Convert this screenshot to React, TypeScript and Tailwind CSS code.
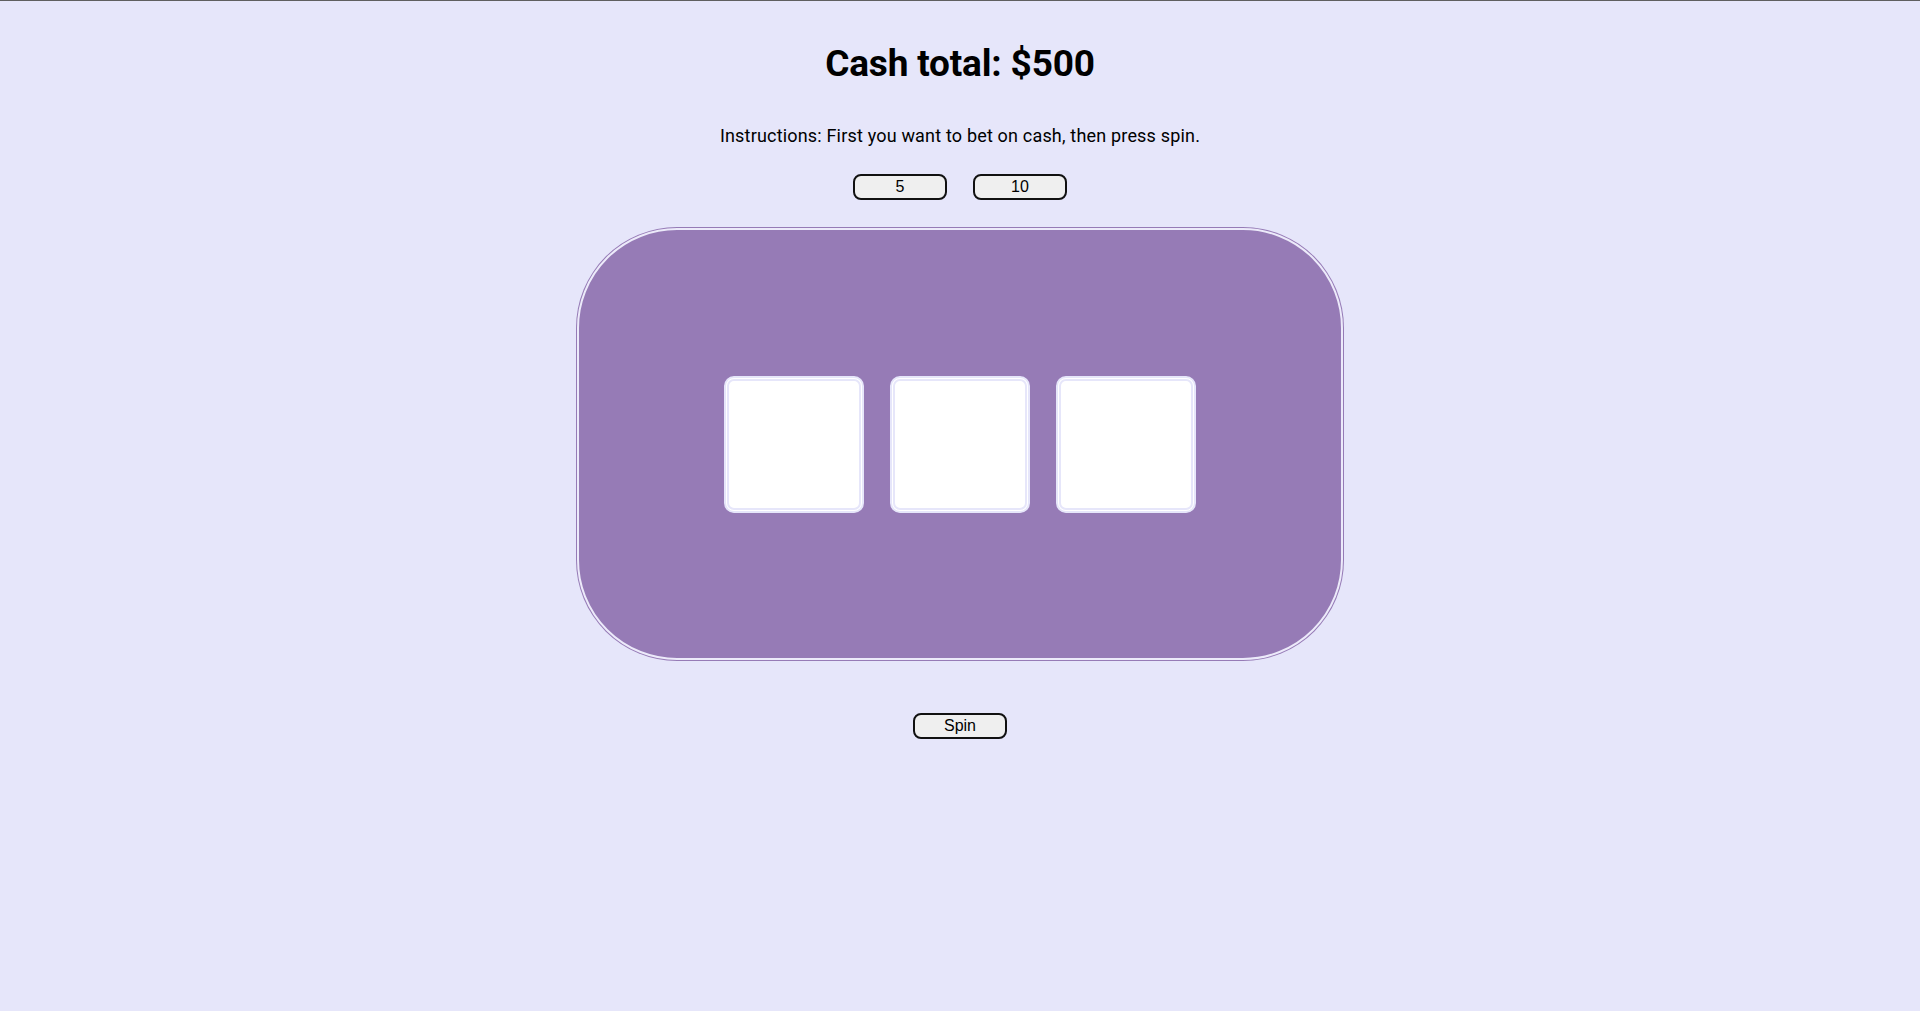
import { useState } from 'react'

const bets = [5, 10]

function Reel() {
  return (
    <div className="w-[140px] h-[137px] rounded-[10px] bg-white border-[5px] border-double border-[#e6e6fa]" />
  )
}

export default function App() {
  const [cash] = useState(500)

  return (
    <div className="min-h-screen bg-[#e6e6fa] border-t border-[#5f5f5f] flex flex-col items-center font-['Roboto',sans-serif] text-black">
      {/* Header */}
      <h1 className="mt-[44px] text-[37px] leading-none font-bold tracking-[-0.005em]">
        Cash total: ${cash}
      </h1>
      <p className="mt-[45px] text-[18px] leading-none tracking-[0.01em]">
        Instructions: First you want to bet on cash, then press spin.
      </p>

      {/* Bet buttons */}
      <div className="mt-[29px] flex gap-[26px]">
        {bets.map((bet) => (
          <button
            key={bet}
            className="w-[94px] h-[26px] rounded-[8px] border-2 border-[#111] bg-[#efefef] font-['Liberation_Sans',Arial,sans-serif] text-[16px] leading-none"
          >
            {bet}
          </button>
        ))}
      </div>

      {/* Slot machine */}
      <div className="mt-[28px] w-[766px] h-[432px] rounded-[100px] bg-[#967bb6] border-2 border-[#eceafa] shadow-[0_0_0_1px_#967bb6] flex items-center justify-center gap-[26px]">
        <Reel />
        <Reel />
        <Reel />
      </div>

      <button className="mt-[53px] w-[94px] h-[26px] rounded-[8px] border-2 border-[#111] bg-[#efefef] font-['Liberation_Sans',Arial,sans-serif] text-[16px] leading-none">
        Spin
      </button>
    </div>
  )
}
